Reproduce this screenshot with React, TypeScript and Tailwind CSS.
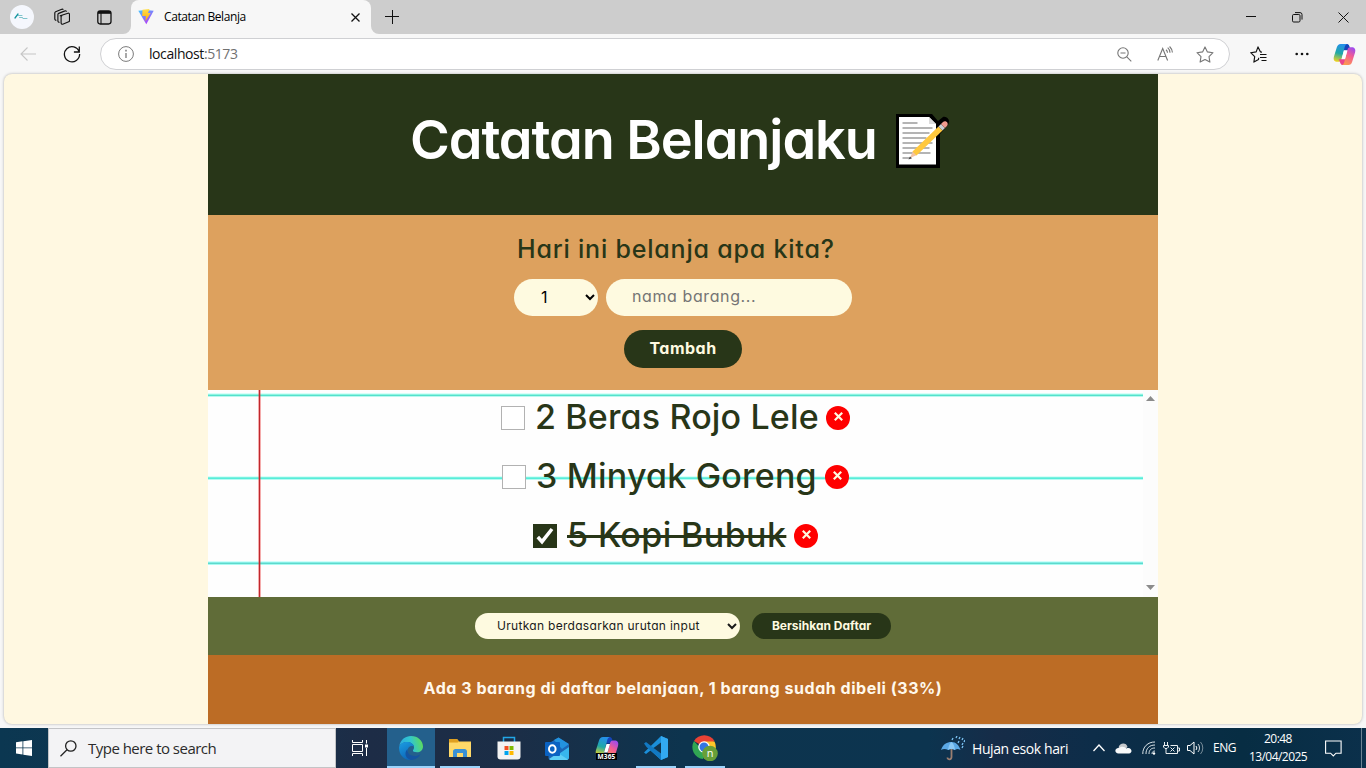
import type { ReactNode } from "react";

const UI = "font-['Open_Sans','Noto_Sans',sans-serif]";

function TabStrip() {
  return (
    <div className="flex h-[34px] shrink-0 items-end bg-[#cdcdcd]">
      <div className="flex h-[34px] w-[123px] shrink-0 items-center pl-[10px]">
        <div className="flex h-6 w-6 items-center justify-center rounded-full bg-[#f5f7fd]">
          <svg width="16" height="10" viewBox="0 0 16 10" fill="none" stroke="#1596a0" strokeLinecap="round">
            <path d="M1 6 4 2" strokeWidth="1.3" />
            <path d="M4 3.5h4M5.5 5.500h3M9 6.500h4" strokeWidth="0.7" opacity=".75" />
          </svg>
        </div>
        <svg className="ml-5" width="16" height="18" viewBox="0 0 16 18" fill="none" stroke="#111" strokeWidth="1.15" strokeLinejoin="round">
          <path d="M6.2 7.8 14 5.2a1.2 1.2 0 0 1 1.5 1.1v6.3c0 .6-.3 1-.8 1.2l-6 2.4a1.2 1.2 0 0 1-1.6-1.1V8.8c0-.5.3-.9.8-1.1Z" />
          <path d="M5.6 14.2a1.3 1.3 0 0 1-1.7-1.3V6.5c0-.5.3-.9.8-1.1L11 2.9c.7-.3 1.4.1 1.6.8" />
          <path d="M2.4 12.2A1.3 1.3 0 0 1 .8 11V4.9c0-.5.3-.9.8-1.1L7.8 1.2c.6-.2 1.2 0 1.5.5" />
        </svg>
        <svg className="ml-[27px]" width="15" height="15" viewBox="0 0 15 15" fill="none" stroke="#111" strokeWidth="1.3">
          <rect x=".8" y=".8" width="13.2" height="13.2" rx="2.4" />
          <path d="M1 2.4h13" strokeWidth="2.8" />
          <path d="M4 3v11" strokeWidth="1.1" />
        </svg>
      </div>
      <svg className="shrink-0" width="8" height="34" viewBox="0 0 8 34"><path d="M0 34a8 8 0 0 0 8-8v8Z" fill="#f7f7f7" /></svg>
      <div className="flex h-[34px] w-[240px] shrink-0 items-center rounded-t-[8px] bg-[#f7f7f7] pl-[7px]">
        <svg width="16" height="16" viewBox="0 0 16 16">
          <defs>
            <linearGradient id="va" x1="0" y1="0" x2="0.6" y2="1"><stop stopColor="#41c8ff" /><stop offset="1" stopColor="#b43bfb" /></linearGradient>
            <linearGradient id="vb" x1="0" y1="0" x2="0" y2="1"><stop stopColor="#ffdf4a" /><stop offset="1" stopColor="#ffab08" /></linearGradient>
          </defs>
          <path d="M.3 1.8 8 .9l7.7.9L8.300 15.300Z" fill="url(#va)" />
          <path d="m4.500.8 7-.8-1.500 4h2.600L7.500 12.200l.3-5.100H4.200Z" fill="url(#vb)" />
        </svg>
        <span className={`${UI} ml-[10px] w-[187px] text-[12px] tracking-[-0.4px] text-black`}>Catatan Belanja</span>
        <svg width="9" height="9" viewBox="0 0 9 9" stroke="#111" strokeWidth="1.3"><path d="m.5.5 8 8m0-8-8 8" /></svg>
      </div>
      <svg className="shrink-0" width="8" height="34" viewBox="0 0 8 34"><path d="M8 34a8 8 0 0 1-8-8v8Z" fill="#f7f7f7" /></svg>
      <svg className="mb-[10px] ml-[6px] shrink-0" width="14" height="14" viewBox="0 0 14 14" stroke="#111" strokeWidth="1"><path d="M0 6.5h14M7.5 0v14" /></svg>
      <div className="ml-auto flex h-[34px] items-center pr-[17px]">
        <svg width="10" height="10" viewBox="0 0 10 10" stroke="#111"><path d="M0 4.5h10" /></svg>
        <svg className="ml-9" width="11" height="11" viewBox="0 0 11 11" fill="none" stroke="#111"><rect x=".5" y="2.5" width="7.5" height="7.5" rx="1.2" /><path d="M3 .6h5a2 2 0 0 1 2 2v5" /></svg>
        <svg className="ml-[35px]" width="11" height="11" viewBox="0 0 11 11" stroke="#111"><path d="m.5.5 10 10m0-10-10 10" /></svg>
      </div>
    </div>
  );
}

function Toolbar() {
  return (
    <div className="flex h-[40px] shrink-0 items-center pl-5">
      <svg width="16" height="14" viewBox="0 0 16 14" fill="none" stroke="#c6c6c6" strokeWidth="1.1"><path d="M16 7H1m6.5-6.5L1 7l6.5 6.5" /></svg>
      <svg className="ml-[27px]" width="18" height="18" viewBox="0 0 18 18" fill="none" stroke="#111" strokeWidth="1.3"><path d="M16.2 6.8A7.6 7.6 0 1 0 16.6 9M16.3 1.5V7h-5.4" /></svg>
      <div className="ml-[19px] flex h-8 w-[1130px] shrink-0 items-center rounded-full border border-[#cfd0d3] bg-white pl-[17px]">
        <svg width="16" height="16" viewBox="0 0 16 16" fill="none" stroke="#7a7a7a"><circle cx="8" cy="8" r="7.4" /><path d="M8 7v5" strokeWidth="1.3" /><path d="M8 3.8v1.6" strokeWidth="1.5" /></svg>
        <span className={`${UI} mb-[2px] ml-[15px] text-[14px] tracking-[-0.42px] text-[#111]`}>localhost<span className="text-[#717171]">:5173</span></span>
        <div className="ml-auto flex items-center pr-[15px] text-[#767676]">
          <svg width="15" height="15" viewBox="0 0 15 15" fill="none" stroke="currentColor" strokeWidth="1.1"><circle cx="6" cy="6" r="5.2" /><path d="M3.5 6h5M9.8 9.8l4.5 4.5" /></svg>
          <svg className="ml-[25px]" width="17" height="16" viewBox="0 0 17 16" fill="none" stroke="currentColor" strokeWidth="1.1"><path d="m.8 14.5 4.9-12 4.9 12M2.4 10.5h6.4M9 3.8a4 4 0 0 1 1.5 3M10.700 1.700A7 7 0 0 1 13 6.800M12.600.5A9.500 9.500 0 0 1 15.400 6.500" /></svg>
          <svg className="ml-[22px]" width="18" height="17" viewBox="0 0 18 17" fill="none" stroke="currentColor" strokeWidth="1.1" strokeLinejoin="round"><path d="m9 .9 2.4 5 5.6.8-4 3.9.9 5.5-4.9-2.6-4.9 2.6.9-5.5-4-3.9 5.6-.8Z" /></svg>
        </div>
      </div>
      <svg className="ml-5 shrink-0" width="17" height="17" viewBox="0 0 17 17" fill="none" stroke="#111" strokeWidth="1.15" strokeLinejoin="round"><path d="m8.7 11.8-.2 1.7-4.6 2.6.8-5.5-4-3.900 5.500-.8L8 .9l2.500 5 1.500.2M10 8.500h6.500M10 11.500h6.500M11.500 14.500h5" /></svg>
      <svg className="ml-7 shrink-0" width="14" height="4" viewBox="0 0 14 4" fill="#111"><circle cx="1.7" cy="2" r="1.3" /><circle cx="7" cy="2" r="1.3" /><circle cx="12.3" cy="2" r="1.3" /></svg>
      <div className="ml-6 shrink-0"><Copilot size={23} /></div>
    </div>
  );
}

function Copilot({ size }: { size: number }) {
  return (
    <svg width={size} height={size} viewBox="0 0 24 24">
      <defs>
        <linearGradient id="ca" x1="0.4" y1="0" x2="0.2" y2="1"><stop stopColor="#2590e8" /><stop offset=".5" stopColor="#1fa9a6" /><stop offset="1" stopColor="#f5d41d" /></linearGradient>
        <linearGradient id="cb" x1="0.8" y1="0" x2="0.3" y2="1"><stop stopColor="#9b4af2" /><stop offset=".45" stopColor="#f45c91" /><stop offset="1" stopColor="#fb9b4d" /></linearGradient>
      </defs>
      <path d="M11 7.500h7.500L17 3C16.500 1.600 15.600 1 14 1h-4Z" fill="#1644bb" />
      <path d="M14 1H8C5.800 1 4.700 2.300 4 4.500L1 14c-1 3.500.5 5.500 3.600 5.500H6c1.600 0 2.400-.8 2.900-2.500L12 5C12.500 2.800 13 1.600 14.500 1.200Z" fill="url(#ca)" />
      <path d="M13 17H6l1.500 3.500C8 22.300 8.900 23 10.400 23H14Z" fill="#e9458b" />
      <path d="M10 23H16c2.200 0 3.300-1.300 4-3.500L23 10c1-3.500-.5-5.500-3.600-5.500H18c-1.600 0-2.400.8-2.900 2.500L12 19c-.5 2.200-1.100 3.400-2.500 3.800Z" fill="url(#cb)" />
      <path d="M11.500 8H15l-2.500 8.500H9Z" fill="#fff" />
    </svg>
  );
}

function Memo() {
  return (
    <svg className="shrink-0" width="56" height="56" viewBox="0 0 56 56">
      <path d="M1 1h36l6 7 5-4c4-1 8 3 5 8l-8 9v34H1Z" fill="#000" />
      <path d="M4 4h30L41 11v40.500H4Z" fill="#fff" />
      <path d="M34 4 41 11h-7Z" fill="#dcdcdc" />
      <path d="M7.500 10h15M7.500 15h30M7.500 20h27M7.500 25h24M7.500 30h30M7.500 35h27M7.500 40h28M7.500 45h9" stroke="#9c9c9c" strokeWidth="1.300" />
      <path d="m15 45 3-7 4 4Z" fill="#f3c3a4" />
      <path d="m13.500 46.500 1.500-3 1.700 1.700Z" fill="#444" />
      <path d="m17.500 38.500 26-25 4 4-26 25Z" fill="#ffc83d" />
      <path d="m43.500 13.500 2.500-2.500 4 4-2.500 2.500Z" fill="#c8cdd3" />
      <path d="m46 11 2-2c2.700-2 6.200 1 4 4l-2 2Z" fill="#f19a8e" />
    </svg>
  );
}

type Item = { id: number; label: string; done: boolean; textClass: string; rowClass: string };

const items: Item[] = [
  { id: 1, label: "2 Beras Rojo Lele", done: false, textClass: "w-[283px] tracking-[0.15px]", rowClass: "pl-[293px]" },
  { id: 2, label: "3 Minyak Goreng", done: false, textClass: "w-[281px] tracking-[0.2px]", rowClass: "pl-[294px]" },
  { id: 3, label: "5 Kopi Bubuk", done: true, textClass: "w-[219px] tracking-[0.4px]", rowClass: "pl-[325px]" },
];

function ListItem({ item }: { item: Item }) {
  return (
    <li className={`flex h-[59px] items-center ${item.rowClass}`}>
      {item.done ? (
        <span className="flex h-6 w-6 shrink-0 items-center justify-center bg-[#283618]">
          <svg width="18" height="18" viewBox="0 0 18 18" fill="none" stroke="#fff" strokeWidth="3.5"><path d="m1.800 10 4.200 4.700L16 2" /></svg>
        </span>
      ) : (
        <span className="h-6 w-6 shrink-0 border border-[#b2b2b2] bg-white" />
      )}
      <span className="ml-[10px] flex shrink-0 pb-[2px]">
        <span className={`shrink-0 whitespace-nowrap text-[34px] font-medium leading-[56px] ${item.textClass} ${item.done ? "line-through decoration-[3px]" : ""}`}>{item.label}</span>
      </span>
      <button className="ml-2 flex h-6 w-6 shrink-0 items-center justify-center rounded-full bg-[#ff0000]">
        <svg className="mb-[2px]" width="9" height="9" viewBox="0 0 9 9" stroke="#fefae0" strokeWidth="2.200"><path d="m.8.8 7.400 7.400m0-7.400L.8 8.200" /></svg>
      </button>
    </li>
  );
}

function ShoppingApp() {
  return (
    <main className="flex w-[950px] flex-col font-['Inter','Open_Sans',sans-serif] text-[#283618] [font-feature-settings:'cv11']">
      <h1 className="flex h-[141px] shrink-0 items-center bg-[#283618] pb-[8px] pl-[202px] text-white">
        <span className="w-[485px] whitespace-nowrap pb-px text-[54px] font-semibold leading-none tracking-[-1.05px]">Catatan Belanjaku</span>
        <Memo />
      </h1>
      <form className="flex h-[175px] shrink-0 flex-col items-center bg-[#dda15e] pt-[15px]">
        <h3 className="mr-[14px] w-[318px] whitespace-nowrap text-[25px] font-medium leading-[38px] tracking-[0.8px]">Hari ini belanja apa kita?</h3>
        <div className="mt-[11px] flex gap-2">
          <select className="h-[37px] w-[84px] rounded-full bg-[#fefae0] pb-[2px] pl-[23px] text-[16px] text-black">
            <option>1</option>
          </select>
          <input className="h-[37px] w-[246px] rounded-full bg-[#fefae0] px-[26px] pb-[3px] text-[16px] tracking-[0.6px] placeholder:text-[#757575]" placeholder="nama barang..." />
        </div>
        <button className="mt-[14px] h-[38px] w-[118px] rounded-full bg-[#283618] pb-[2px] text-[16px] font-bold tracking-[0.5px] text-[#fefae0]">Tambah</button>
      </form>
      <div className="flex h-[207px] shrink-0">
        <ul className="w-[935px] bg-[#fefefe] [background-image:linear-gradient(90deg,transparent_50px,#e6303066_50px_51px,#c0272d_51px_52px,#e6303066_52px_53px,transparent_53px),linear-gradient(180deg,transparent_3px,#d8fff9_3px_4px,#8ef4e2_4px_5px,#55e1cb_5px_6px,#baf8f0_6px_7px,transparent_7px_86px,#d8fff9_86px_87px,#79f1df_87px_88px,#56edda_88px_89px,#b9faf2_89px_90px,transparent_90px_171px,#d0fffb_171px_172px,#84eee6_172px_173px,#5fd9cc_173px_174px,#a9fbf3_174px_175px,transparent_175px)]">
          <div className="-mt-[2px]">{items.map((item) => <ListItem key={item.id} item={item} />)}</div>
        </ul>
        <div className="flex w-[15px] flex-col items-center justify-between bg-[#fcfcfc] pb-[7px] pt-[6px]">
          <svg width="9" height="5" viewBox="0 0 9 5"><path d="M4.500 0 9 5H0Z" fill="#8b8b8b" /></svg>
          <svg width="9" height="5" viewBox="0 0 9 5"><path d="M0 0h9L4.500 5Z" fill="#8b8b8b" /></svg>
        </div>
      </div>
      <div className="flex h-[58px] shrink-0 items-center justify-center gap-3 bg-[#606c38]">
        <select className="h-[26px] w-[265px] rounded-full bg-[#fefae0] pb-[2px] pl-[18px] text-[12px] tracking-[0.3px] text-[#1a1a1a]">
          <option>Urutkan berdasarkan urutan input</option>
        </select>
        <button className="h-[26px] w-[139px] rounded-full bg-[#283618] pb-px text-[12px] font-bold text-[#fefae0]">Bersihkan Daftar</button>
      </div>
      <footer className="flex h-[69px] shrink-0 items-center justify-center whitespace-nowrap bg-[#bc6c25] pb-[4px] text-[16px] font-bold tracking-[0.53px] text-[#fff8ec]">
        Ada 3 barang di daftar belanjaan, 1 barang sudah dibeli (33%)
      </footer>
    </main>
  );
}

function Task({ children, open, active }: { children: ReactNode; open?: boolean; active?: boolean }) {
  return (
    <div className={`flex h-10 shrink-0 flex-col items-center ${active ? "w-12 bg-[#24608c]" : "w-[49px]"}`}>
      <div className="flex h-[38px] items-center justify-center pt-[2px]">{children}</div>
      <div className={`h-[2px] ${active ? "w-12" : "w-10"} ${open || active ? "bg-[#9bd3fb]" : ""}`} />
    </div>
  );
}

function Taskbar() {
  return (
    <div className={`${UI} mt-1 flex h-10 shrink-0 items-center bg-[linear-gradient(90deg,#0b3751_0,#14344e_17%,#1d2c46_27%,#1b2e47_38%,#0d344e_50%,#0c344f_68%,#162c48_73%,#0d2d49_80%,#072d43_91%,#0b304b_100%)] text-white`}>
      <div className="flex h-10 w-12 shrink-0 items-center justify-center">
        <svg width="16" height="16" viewBox="0 0 16 16" fill="#fff"><path d="M0 2.200 6.500 1.300v6.200H0ZM7.300 1.200 16 0v7.500H7.300ZM0 8.300h6.500v6.200L0 13.600ZM7.300 8.300H16V16l-8.700-1.200Z" /></svg>
      </div>
      <div className="flex h-10 w-72 shrink-0 items-center border border-[#c3c4c6] bg-[#f3f3f5] pl-[11px] text-[#2b2b2b]">
        <svg width="17" height="17" viewBox="0 0 17 17" fill="none" stroke="#222" strokeWidth="1.300"><circle cx="10.800" cy="6" r="5.200" /><path d="m7 9.800-6.500 6.400" /></svg>
        <span className="ml-[11px] text-[15px] tracking-[-0.52px]">Type here to search</span>
      </div>
      <div className="flex h-10 w-[51px] shrink-0 items-center pl-4">
        <svg width="17" height="16" viewBox="0 0 17 16" fill="none" stroke="#fff"><path d="M.5 0v2.500h10V0M.5 16v-2.500h10V16M.5 4.500h10v7H.5ZM14.500 0v3.500M14.500 8v8" /><path d="M13 4.500h3v3h-3Z" fill="#fff" stroke="none" /></svg>
      </div>
      <Task active>
        <svg width="24" height="24" viewBox="0 0 24 24">
          <defs>
            <linearGradient id="ea" x1="0" y1="0.5" x2="1" y2="0.3"><stop stopColor="#2aa9e2" /><stop offset=".5" stopColor="#32c6ce" /><stop offset="1" stopColor="#61dd52" /></linearGradient>
            <linearGradient id="eb" x1="0" y1="0" x2=".5" y2="1"><stop stopColor="#1b9de2" /><stop offset="1" stopColor="#0d66b8" /></linearGradient>
          </defs>
          <path d="M.3 10C1.500 3.500 6.500 0 12 0c7 0 12 5 12 10.500 0 3.800-2.800 5.800-6 5.800-3 0-4.500-1-4-2 1-1.500 1-2.200 1-3C15 8 11.500 6 8 6S1.500 8 .3 10Z" fill="url(#ea)" />
          <path d="M.1 11C1 7.500 4.500 6 8 6c3.500 0 6.500 2 7 4.500-3-1.500-6.500.5-6.500 4 0 4.500 4.500 6.800 8.500 6.300C14 24 10.500 24 10 23.900 4 23.300-.4 18 .1 11Z" fill="url(#eb)" />
          <path d="M8.600 13c-1 7 7.500 9 13 5-2.500 4.500-7 6.300-10 5.900C6 22 5 16.500 8.600 13Z" fill="#1554a0" />
        </svg>
      </Task>
      <Task open>
        <svg width="22" height="19" viewBox="0 0 22 19"><path d="M0 0h8l2 2.500h12V18H0Z" fill="#ffd35c" /><path d="M0 0h8l2 2.500-1.500 1H0Z" fill="#dfa021" /><path d="M0 4h22v14H0Z" fill="#ffd969" /><path d="M4 18v-5.500c0-1.500 1-2.500 2.500-2.500h9c1.500 0 2.500 1 2.500 2.500V18h-4v-4H8v4Z" fill="#3a91d4" /></svg>
      </Task>
      <Task>
        <svg width="24" height="24" viewBox="0 0 24 24"><path d="M6.500 6V1.500h11V6" fill="none" stroke="#22a7e8" strokeWidth="1.500" /><path d="M.5 5.500h23v15c0 2-1 3-3 3h-17c-2 0-3-1-3-3Z" fill="#f3f3f3" /><path d="M7.500 10h4v4h-4Z" fill="#f25022" /><path d="M12.500 10h4v4h-4Z" fill="#7fba00" /><path d="M7.500 15h4v4h-4Z" fill="#00a4ef" /><path d="M12.500 15h4v4h-4Z" fill="#ffb900" /></svg>
      </Task>
      <Task>
        <svg width="25" height="23" viewBox="0 0 25 23"><path d="m3.500 6.500 10-6 10.500 7v13c0 1.500-1 2.500-2.500 2.500h-16c-1 0-2-1-2-2Z" fill="#1c67b7" /><path d="m9 3 4.500-2.500L24 7l-7 5Z" fill="#2393df" /><path d="M24 8v12.500c0 1.500-1 2.500-2.500 2.500H5L24 10Z" fill="#37b7ed" /><path d="m4 22 9-6 10 6.500c-.5.300-1 .5-1.500.5h-16Z" fill="#5ed0f6" /><rect x="0" y="5" width="15" height="14" rx="1" fill="#0a62c2" /><ellipse cx="7.300" cy="12" rx="3.300" ry="3.800" fill="none" stroke="#fff" strokeWidth="2" /></svg>
      </Task>
      <Task>
        <div className="flex h-6 w-6 flex-col items-center">
          <div className="h-[17px]"><Copilot size={24} /></div>
          <span className="relative bg-black px-px text-[6.5px] font-bold leading-[7px] tracking-[0.2px] text-white">M365</span>
        </div>
      </Task>
      <Task open>
        <svg width="24" height="24" viewBox="0 0 24 24"><path d="m17 0 7 3v18l-7 3L6.500 14.500 2 18l-2-1.500L13 4Z" fill="#1b8fda" /><path d="m0 7.500 2-1.500 15.500 12V24L2.500 11Z" fill="#1279c3" /><path d="m17 6.500-7.500 5.500 7.500 5.500Z" fill="#10344e" /><path d="m17 0 7 3v18l-7 3Z" fill="#32a9f1" /></svg>
      </Task>
      <Task open>
        <svg width="26" height="26" viewBox="0 0 26 26"><path d="M12 12 2 6A12 12 0 0 1 22.500 6Z" fill="#e94235" /><path d="M2 6a12 12 0 0 0 9 18l5-9-5 1Z" fill="#31a653" /><path d="M22.500 6.500H12l5 9-5 8.500A12 12 0 0 0 22.500 6.500Z" fill="#fdc629" /><circle cx="12" cy="12" r="5.800" fill="#fff" /><circle cx="12" cy="12" r="4.500" fill="#3476e3" /><circle cx="18" cy="18.500" r="7.800" fill="#689f38" /><text x="18" y="21.800" textAnchor="middle" fontFamily="Open Sans" fontSize="11" fill="#fff">n</text></svg>
      </Task>
      <div className="ml-[212px] flex shrink-0 items-center">
        <svg width="24" height="25" viewBox="0 0 24 25"><path d="M0 14C2 8 6 6 10.500 6S18 9 19.500 14c-2-1.500-4-1.500-5.500 0-2-1.500-5-1.500-7 0-2-1.500-5-1.500-7 0Z" fill="#5ba8e5" /><path d="M7 14c1-5 2-7 3.500-8 2 1.500 3 4 3.500 8-2-1.500-5-1.500-7 0Z" fill="#8ac9f6" /><path d="M10.500 13v8c0 3-4 3-4 .5" fill="none" stroke="#9b7e70" strokeWidth="1.800" /><path d="m12 2-1 2m5-4-1 2m4-1-1 2m4-1-1 2m-3 1-1 2m5 0-1 2m3-5-1 2m-1 4-1 2" stroke="#7cc4f3" strokeWidth="1.300" /></svg>
        <span className="ml-[7px] w-[121px] whitespace-nowrap text-[14px] tracking-[-0.4px]">Hujan esok hari</span>
        <svg width="12" height="8" viewBox="0 0 12 8" fill="none" stroke="#fff" strokeWidth="1.300"><path d="m.5 7 5.500-6 5.500 6" /></svg>
        <svg className="ml-[10px]" width="17" height="11" viewBox="0 0 17 11"><path d="M3.500 4.500C4.500-.5 11.500-1 12.500 4L8 8Z" fill="#c6c9cc" /><path d="M3.500 10.500C-1 10.500-.5 4.500 4 5c3-2.500 6-1 7.500.5 5-2 7 4.500 2.500 5Z" fill="#f8f9fa" /></svg>
        <svg className="ml-[10px]" width="14" height="14" viewBox="0 0 14 14" fill="none" stroke="#dbe4e9" strokeWidth="1"><path d="M.8 13C.5 6 6 .8 13 1M4 13c-.2-5.500 3.500-9 9-9M7 13c0-4 2-6 6-6M10 13c0-2 1-3 3-3" /><circle cx="12" cy="12.500" r="1.200" fill="#fff" stroke="none" /></svg>
        <svg className="ml-[7px]" width="17" height="13" viewBox="0 0 17 13" fill="none" stroke="#e8edef"><path d="M1.500 0v3M4.500 0v3M.5 3.500h5V5L4 6.500H2L.5 5ZM3 7v4.500h11.500v-8H7.500M15 6h1.500v3H15M7.500 5.500l4 4m0-4-4 4" /></svg>
        <svg className="ml-[7px]" width="17" height="14" viewBox="0 0 17 14" fill="none" stroke="#fff"><path d="M.5 4.500H3L7 1v12L3 9.500H.5Z" /><path d="M9 5a3 3 0 0 1 0 4" /><path d="M11 3a6 6 0 0 1 0 8" opacity=".8" /><path d="M13.500 1a9 9 0 0 1 0 12" opacity=".45" /></svg>
        <span className="ml-[9px] w-[26px] text-[12px] tracking-[-0.5px]">ENG</span>
        <div className="ml-[6px] w-[66px] whitespace-nowrap text-center text-[12px] leading-[18px] tracking-[-0.55px]">20:48<br />13/04/2025</div>
        <svg className="ml-[14px]" width="17" height="17" viewBox="0 0 17 17" fill="none" stroke="#fff" strokeWidth="1.100"><path d="M.6 1h15.500v12.200H11L8.300 16l-2.700-2.800h-5Z" /></svg>
        <div className="ml-[19px] h-10 w-px bg-[#6b8393]" />
      </div>
    </div>
  );
}

export default function App() {
  return (
    <div className="flex h-[768px] w-[1366px] flex-col overflow-hidden bg-[#f7f7f7]">
      <TabStrip />
      <Toolbar />
      <div className="mx-1 flex h-[650px] shrink-0 justify-center overflow-hidden rounded-[8px] bg-[#fff8e1] shadow-[0_0_3px_rgba(0,0,0,0.3)]">
        <ShoppingApp />
      </div>
      <Taskbar />
    </div>
  );
}
